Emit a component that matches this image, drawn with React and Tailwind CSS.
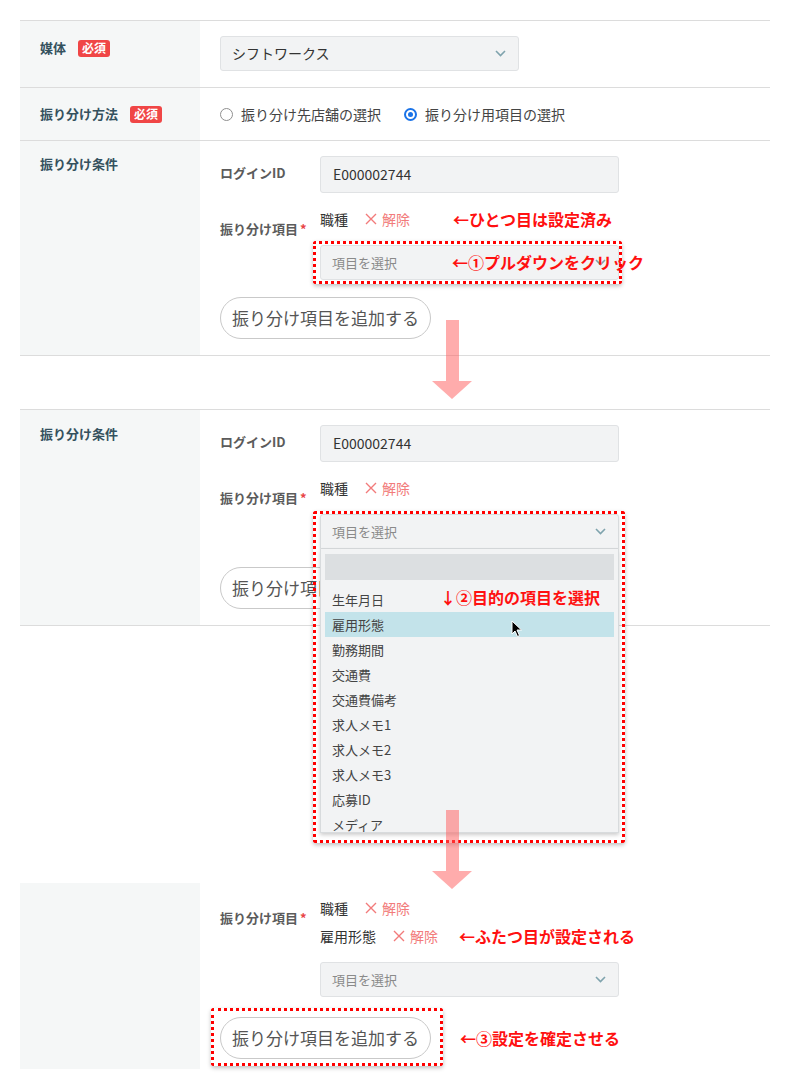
import React from 'react';

// Step-by-step guide screenshot: 振り分け条件 form, dropdown flow

function Badge() {
  return (
    <span className="ml-3 inline-flex h-[17px] items-center rounded-[3px] bg-[#f04646] px-[4px] text-[12px] font-bold leading-none text-white">
      必須
    </span>
  );
}

function RowLabel({ children, className = '' }) {
  return (
    <div className={`w-[180px] shrink-0 bg-[#f5f7f7] pl-5 ${className}`}>
      <div className="flex items-center text-[13px] font-bold leading-5 text-[#34515e]">{children}</div>
    </div>
  );
}

function Chevron() {
  return (
    <svg width="11" height="7" viewBox="0 0 11 7" className="shrink-0">
      <polyline points="1,1 5.5,5.5 10,1" fill="none" stroke="#7fa3ad" strokeWidth="1.6" />
    </svg>
  );
}

function SelectBox({ value, placeholder }) {
  return (
    <div className="flex h-[35px] w-[299px] items-center justify-between rounded-[3px] border border-[#e0e2e4] bg-[#f2f3f4] pl-[11px] pr-[12px]">
      {value ? (
        <span className="text-[14px] text-[#333]">{value}</span>
      ) : (
        <span className="text-[13px] text-[#8a8a8a]">{placeholder}</span>
      )}
      <Chevron />
    </div>
  );
}

function Chip({ name }) {
  return (
    <div className="flex h-[22px] items-center text-[14px] leading-[22px]">
      <span className="text-[#333]">{name}</span>
      <span className="ml-[17px] flex items-center text-[#f27b7b]">
        <svg width="12" height="12" viewBox="0 0 12 12" className="mr-[5px]">
          <path d="M1 1 L11 11 M11 1 L1 11" stroke="#f27b7b" strokeWidth="1.4" />
        </svg>
        解除
      </span>
    </div>
  );
}

function Note({ children, className = '' }) {
  return <span className={`whitespace-nowrap text-[16px] font-bold leading-[22px] text-[#ff1010] ${className}`}>{children}</span>;
}

function AddButton() {
  return (
    <button
      type="button"
      className="flex h-[42px] w-[211px] items-center justify-center rounded-full border border-[#c9c9c9] bg-white text-[17px] text-[#555]"
    >
      振り分け項目を追加する
    </button>
  );
}

function Radio({ checked, label }) {
  return (
    <label className="flex items-center text-[14px] text-[#444]">
      {checked ? (
        <span className="flex h-[13px] w-[13px] items-center justify-center rounded-full border-2 border-[#1a73e8] bg-white">
          <span className="h-[5px] w-[5px] rounded-full bg-[#1a73e8]" />
        </span>
      ) : (
        <span className="h-[13px] w-[13px] rounded-full border border-[#8f8f8f] bg-white" />
      )}
      <span className="ml-[8px]">{label}</span>
    </label>
  );
}

function DottedFrame({ className }) {
  return (
    <div
      className={`pointer-events-none absolute rounded-[3px] border-[3px] border-dotted border-[#ff0000] shadow-[0_2px_4px_rgba(0,0,0,0.25)] ${className}`}
    />
  );
}

function LoginRow() {
  return (
    <div className="flex items-center">
      <div className="-mt-[4px] w-[100px] text-[13px] font-bold text-[#5b5b5b]">ログインID</div>
      <div className="flex h-[37px] w-[299px] items-center rounded-[3px] border border-[#e0e2e4] bg-[#f2f3f4] pl-[12px] text-[14px] text-[#333]">
        E000002744
      </div>
    </div>
  );
}

function ItemLabel() {
  return (
    <div className="w-[100px] pt-[11px] text-[13px] font-bold leading-5 text-[#5b5b5b]">
      振り分け項目<span className="ml-[2px] text-[#e84444]">*</span>
    </div>
  );
}

const OPTIONS = ['生年月日', '雇用形態', '勤務期間', '交通費', '交通費備考', '求人メモ1', '求人メモ2', '求人メモ3', '応募ID', 'メディア'];

function OpenDropdown() {
  return (
    <div className="relative z-10 w-[299px]">
      <DottedFrame className="-left-[7px] -top-[3px] -right-[6px] h-[332px]" />
      <div className="flex h-[35px] items-center justify-between rounded-t-[3px] border border-[#d8dbdd] bg-[#f2f3f4] pl-[11px] pr-[12px] shadow-[0_1px_3px_rgba(0,0,0,0.15)]">
        <span className="text-[13px] text-[#8a8a8a]">項目を選択</span>
        <Chevron />
      </div>
      <div className="absolute left-0 right-0 top-full h-[284px] overflow-hidden border border-t-0 border-[#d8dbdd] bg-[#f2f3f4] shadow-[0_2px_4px_rgba(0,0,0,0.2)]">
        <div className="mx-[4px] mt-[5px] h-[26px] bg-[#dcdfe1]" />
        <div className="mt-[7px] px-[4px]">
          {OPTIONS.map((o) => (
            <div
              key={o}
              className={`flex h-[25px] items-center pl-[7px] text-[13px] text-[#444] ${o === '雇用形態' ? 'bg-[#c3e3ea] text-[#333]' : ''}`}
            >
              {o}
            </div>
          ))}
        </div>
        <Note className="absolute left-[119px] top-[37px]">↓②目的の項目を選択</Note>
        <svg width="12" height="18" viewBox="0 0 12 18" className="absolute left-[190px] top-[71px]">
          <path d="M1 1 L1 14 L4 11 L6.5 16.5 L8.5 15.5 L6 10 L10.5 10 Z" fill="#000" stroke="#fff" strokeWidth="1" />
        </svg>
      </div>
    </div>
  );
}

function DownArrow({ className }) {
  return (
    <svg width="40" height="80" viewBox="0 0 40 80" className={`pointer-events-none absolute z-20 ${className}`}>
      <path d="M14 0 H27 V61 H40 L20 79 L0 61 H14 Z" fill="rgb(255,90,90)" fillOpacity="0.5" />
    </svg>
  );
}

export default function App() {
  return (
    <div className="relative h-[1083px] w-[788px] overflow-hidden bg-white font-['Noto_Sans_CJK_JP','Noto_Sans',sans-serif]">
      <div className="pl-5 pr-[18px] pt-5">
        {/* section 1 */}
        <div className="border-t border-[#dcdcdc]">
          <div className="flex h-[67px] border-b border-[#dcdcdc]">
            <RowLabel className="pt-[17px]">
              媒体
              <Badge />
            </RowLabel>
            <div className="flex-1 pl-5 pt-[15px]">
              <SelectBox value="シフトワークス" />
            </div>
          </div>
          <div className="flex h-[53px] border-b border-[#dcdcdc]">
            <RowLabel className="pt-[16px]">
              振り分け方法
              <Badge />
            </RowLabel>
            <div className="flex flex-1 items-center gap-[23px] pl-5">
              <Radio label="振り分け先店舗の選択" />
              <Radio checked label="振り分け用項目の選択" />
            </div>
          </div>
          <div className="flex h-[215px] border-b border-[#dcdcdc]">
            <RowLabel className="pt-[13px]">振り分け条件</RowLabel>
            <div className="flex-1 pl-5 pt-[15px]">
              <LoginRow />
              <div className="mt-[15px] flex">
                <ItemLabel />
                <div>
                  <div className="flex items-center">
                    <Chip name="職種" />
                    <Note className="ml-[43px]">←ひとつ目は設定済み</Note>
                  </div>
                  <div className="relative mt-[15px]">
                    <SelectBox placeholder="項目を選択" />
                    <DottedFrame className="-left-[7px] -top-[4px] -right-[3px] -bottom-[4px]" />
                    <Note className="absolute left-[132px] top-[6px]">←①プルダウンをクリック</Note>
                  </div>
                </div>
              </div>
              <div className="mt-[17px]">
                <AddButton />
              </div>
            </div>
          </div>
        </div>

        {/* section 2 */}
        <div className="mt-[53px] border-y border-[#dcdcdc]">
          <div className="flex h-[215px]">
            <RowLabel className="pt-[14px]">振り分け条件</RowLabel>
            <div className="flex-1 pl-5 pt-[15px]">
              <LoginRow />
              <div className="mt-[15px] flex">
                <ItemLabel />
                <div>
                  <Chip name="職種" />
                  <div className="mt-[15px]">
                    <OpenDropdown />
                  </div>
                </div>
              </div>
              <div className="mt-[18px]">
                <AddButton />
              </div>
            </div>
          </div>
        </div>

        {/* section 3 */}
        <div className="mt-[257px] flex h-[186px]">
          <div className="w-[180px] shrink-0 bg-[#f5f7f7]" />
          <div className="flex-1 pl-5 pt-[14px]">
            <div className="flex">
              <ItemLabel />
              <div>
                <Chip name="職種" />
                <div className="mt-[6px] flex items-center">
                  <Chip name="雇用形態" />
                  <Note className="ml-[21px]">←ふたつ目が設定される</Note>
                </div>
                <div className="mt-[15px]">
                  <SelectBox placeholder="項目を選択" />
                </div>
              </div>
            </div>
            <div className="relative mt-[20px] flex items-center">
              <div className="relative">
                <AddButton />
                <DottedFrame className="-left-[9px] -top-[9px] -right-[12px] -bottom-[7px]" />
              </div>
              <Note className="ml-[29px]">←③設定を確定させる</Note>
            </div>
          </div>
        </div>
      </div>

      <DownArrow className="left-[432px] top-[320px]" />
      <DownArrow className="left-[432px] top-[810px]" />
    </div>
  );
}
